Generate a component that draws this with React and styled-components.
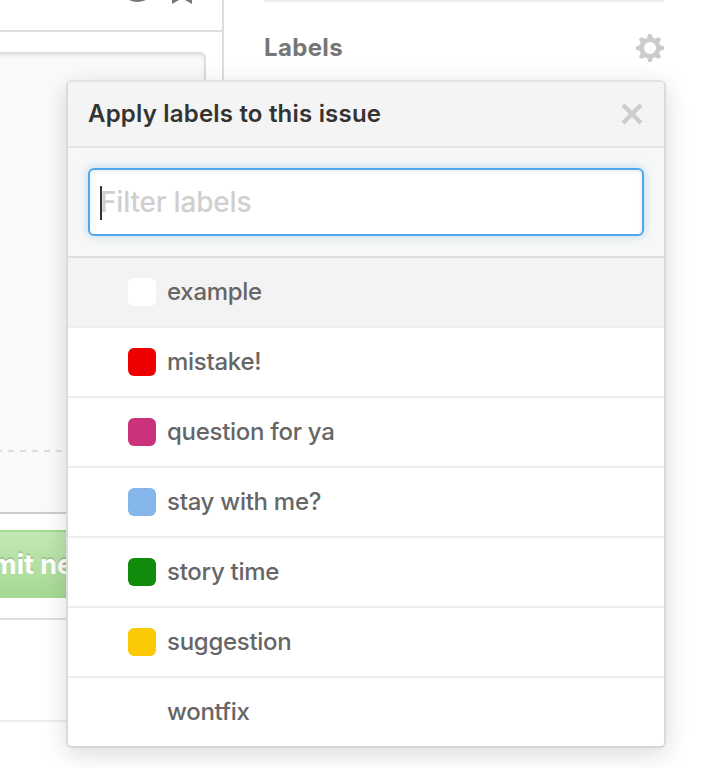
import React from "react";
import styled, { createGlobalStyle } from "styled-components";

const GlobalStyle = createGlobalStyle`
  * { box-sizing: border-box; }
  body { margin: 0; background: #fff; overflow: hidden; }
`;

const Page = styled.div`
  position: relative;
  width: 726px;
  height: 768px;
  overflow: hidden;
  display: flex;
  align-items: flex-start;
  gap: 40px;
  font-family: Inter, "Liberation Sans", sans-serif;
  font-size: 24px;
  color: #666;
`;

const Main = styled.main`
  width: 224px;
  flex: none;
`;

const Composer = styled.section`
  height: 620px;
  border-right: 2px solid #ddd;
  border-bottom: 2px solid #ddd;
`;

const Toolbar = styled.div`
  height: 32px;
  border-bottom: 2px solid #ddd;
  padding-left: 124px;
  svg { display: block; }
`;

const Editor = styled.div`
  margin: 20px 16px 0 -8px;
  height: 462px;
  border: 2px solid #ddd;
  border-bottom-color: #ccc;
  border-radius: 6px 6px 0 0;
  background: #fafafa;
  box-shadow: inset 0 2px 4px rgba(0, 0, 0, 0.075);
  padding-top: 396px;
`;

const DashedRule = styled.div`
  height: 2px;
  background: repeating-linear-gradient(90deg, #ddd 0 6px, transparent 6px 12px);
  background-position: 2px 0;
`;

const SubmitButton = styled.button`
  display: block;
  width: 206px;
  height: 68px;
  margin: 16px 0 0;
  padding: 1px 0 0;
  border: 2px solid #a3d98e;
  border-left: 0;
  background: linear-gradient(#c3e8b4, #a6d993);
  color: #fff;
  font: 700 27px/64px Inter, sans-serif;
  text-align: left;
  text-indent: -8px;
  text-shadow: 0 -2px 0 rgba(0, 0, 0, 0.15);
  white-space: nowrap;
`;

const FooterArea = styled.footer`
  height: 102px;
  border-bottom: 2px solid #eee;
`;

const Sidebar = styled.aside`
  width: 400px;
  border-top: 2px solid #eee;
  padding-top: 31px;
`;

const SidebarHeading = styled.div`
  display: flex;
  align-items: center;
  justify-content: space-between;
  height: 30px;
  color: #767676;
  font-weight: 700;
  line-height: 30px;
`;

const Popover = styled.div`
  position: absolute;
  left: 66px;
  top: 80px;
  width: 600px;
  border: 2px solid #dadada;
  border-top-color: #e2e2e2;
  border-bottom-color: #d6d6d6;
  border-radius: 6px;
  background: #fff;
  box-shadow: 0 6px 24px rgba(0, 0, 0, 0.15);
  overflow: hidden;
`;

const PopoverHeader = styled.header`
  display: flex;
  align-items: center;
  justify-content: space-between;
  height: 66px;
  padding: 0 21px 0 20px;
  border-bottom: 2px solid #e4e4e4;
  background: #f4f4f4;
  color: #333;
  font-weight: 600;
`;

const FilterArea = styled.div`
  height: 110px;
  padding: 20px;
  border-bottom: 2px solid #ddd;
  background: #f7f7f7;
`;

const FilterInput = styled.div`
  display: flex;
  align-items: center;
  height: 68px;
  padding: 0 10px;
  border: 2px solid #51a7e8;
  border-radius: 6px;
  background: #fff;
  box-shadow: inset 0 2px 4px rgba(0, 0, 0, 0.075), 0 0 10px rgba(81, 167, 232, 0.4);
  color: #d0d0d0;
  font-size: 28px;
  font-weight: 500;
`;

const Caret = styled.span`
  width: 2px;
  height: 34px;
  margin: 2px -2px 0 0;
  background: #333;
  z-index: 1;
`;

const LabelRow = styled.div`
  display: flex;
  align-items: center;
  height: ${({ $last }) => ($last ? 68 : 70)}px;
  padding-left: 60px;
  gap: 11px;
  border-bottom: ${({ $last }) => ($last ? "0" : "2px solid #eee")};
  background: ${({ $active }) => ($active ? "#f3f3f3" : "#fff")};
  font-weight: 500;
`;

const Swatch = styled.span`
  width: 28px;
  height: 28px;
  border-radius: 6px;
  background: ${({ $color }) => $color};
`;

const Copy = styled.span`
  display: block;
  white-space: pre;
  line-height: 30px;
  letter-spacing: ${({ $track = 0 }) => $track}px;
`;

const labels = [
  { name: "example", color: "#ffffff" },
  { name: "mistake!", color: "#ee0000" },
  { name: "question for ya", color: "#cc317c" },
  { name: "stay with me?", color: "#84b6eb" },
  { name: "story time", color: "#128a0c" },
  { name: "suggestion", color: "#fbca04" },
  { name: "wontfix", color: "#ffffff" },
];

function Gear() {
  return (
    <svg width="28" height="28" viewBox="0 0 14 14" fill="#ccc">
      <path d="M14 7.77V6.17l-1.94-.64-.45-1.09.88-1.84-1.13-1.13-1.81.91-1.09-.45L7.77 0h-1.6l-.63 1.94-1.11.45-1.84-.88-1.13 1.13.91 1.81-.45 1.09L0 6.23v1.59l1.94.64.45 1.09-.88 1.84 1.13 1.13 1.81-.91 1.09.45.69 1.92h1.59l.63-1.94 1.11-.45 1.84.88 1.13-1.13-.92-1.81.47-1.09L14 7.75zM7 10a3 3 0 1 1 0-6 3 3 0 0 1 0 6z" />
    </svg>
  );
}

export default function App() {
  return (
    <>
      <GlobalStyle />
      <Page>
        <Main>
          <Composer>
            <Toolbar>
              <svg width="80" height="8" viewBox="0 0 80 8" fill="#777">
                <path d="M5 0h17Q13 4 5 0z" />
                <path d="M48 0h20v4l-7-4h-6l-7 4z" />
              </svg>
            </Toolbar>
            <Editor><DashedRule /></Editor>
            <SubmitButton>mit new issue</SubmitButton>
          </Composer>
          <FooterArea />
        </Main>
        <Sidebar>
          <SidebarHeading><Copy $track={0.35}>Labels</Copy><Gear /></SidebarHeading>
        </Sidebar>
        <Popover>
          <PopoverHeader>
            <Copy $track={0.2}>Apply labels to this issue</Copy>
            <svg width="22" height="22" viewBox="0 0 22 22" fill="none" stroke="#ccc" strokeWidth="4.4">
              <path d="M2 2l18 18M20 2L2 20" />
            </svg>
          </PopoverHeader>
          <FilterArea>
            <FilterInput><Caret /><Copy $track={-0.2}>Filter labels</Copy></FilterInput>
          </FilterArea>
          {labels.map((label, i) => (
            <LabelRow key={label.name} $active={i === 0} $last={i === labels.length - 1}>
              <Swatch $color={label.color} />
              <Copy $track={-0.28}>{label.name}</Copy>
            </LabelRow>
          ))}
        </Popover>
      </Page>
    </>
  );
}
